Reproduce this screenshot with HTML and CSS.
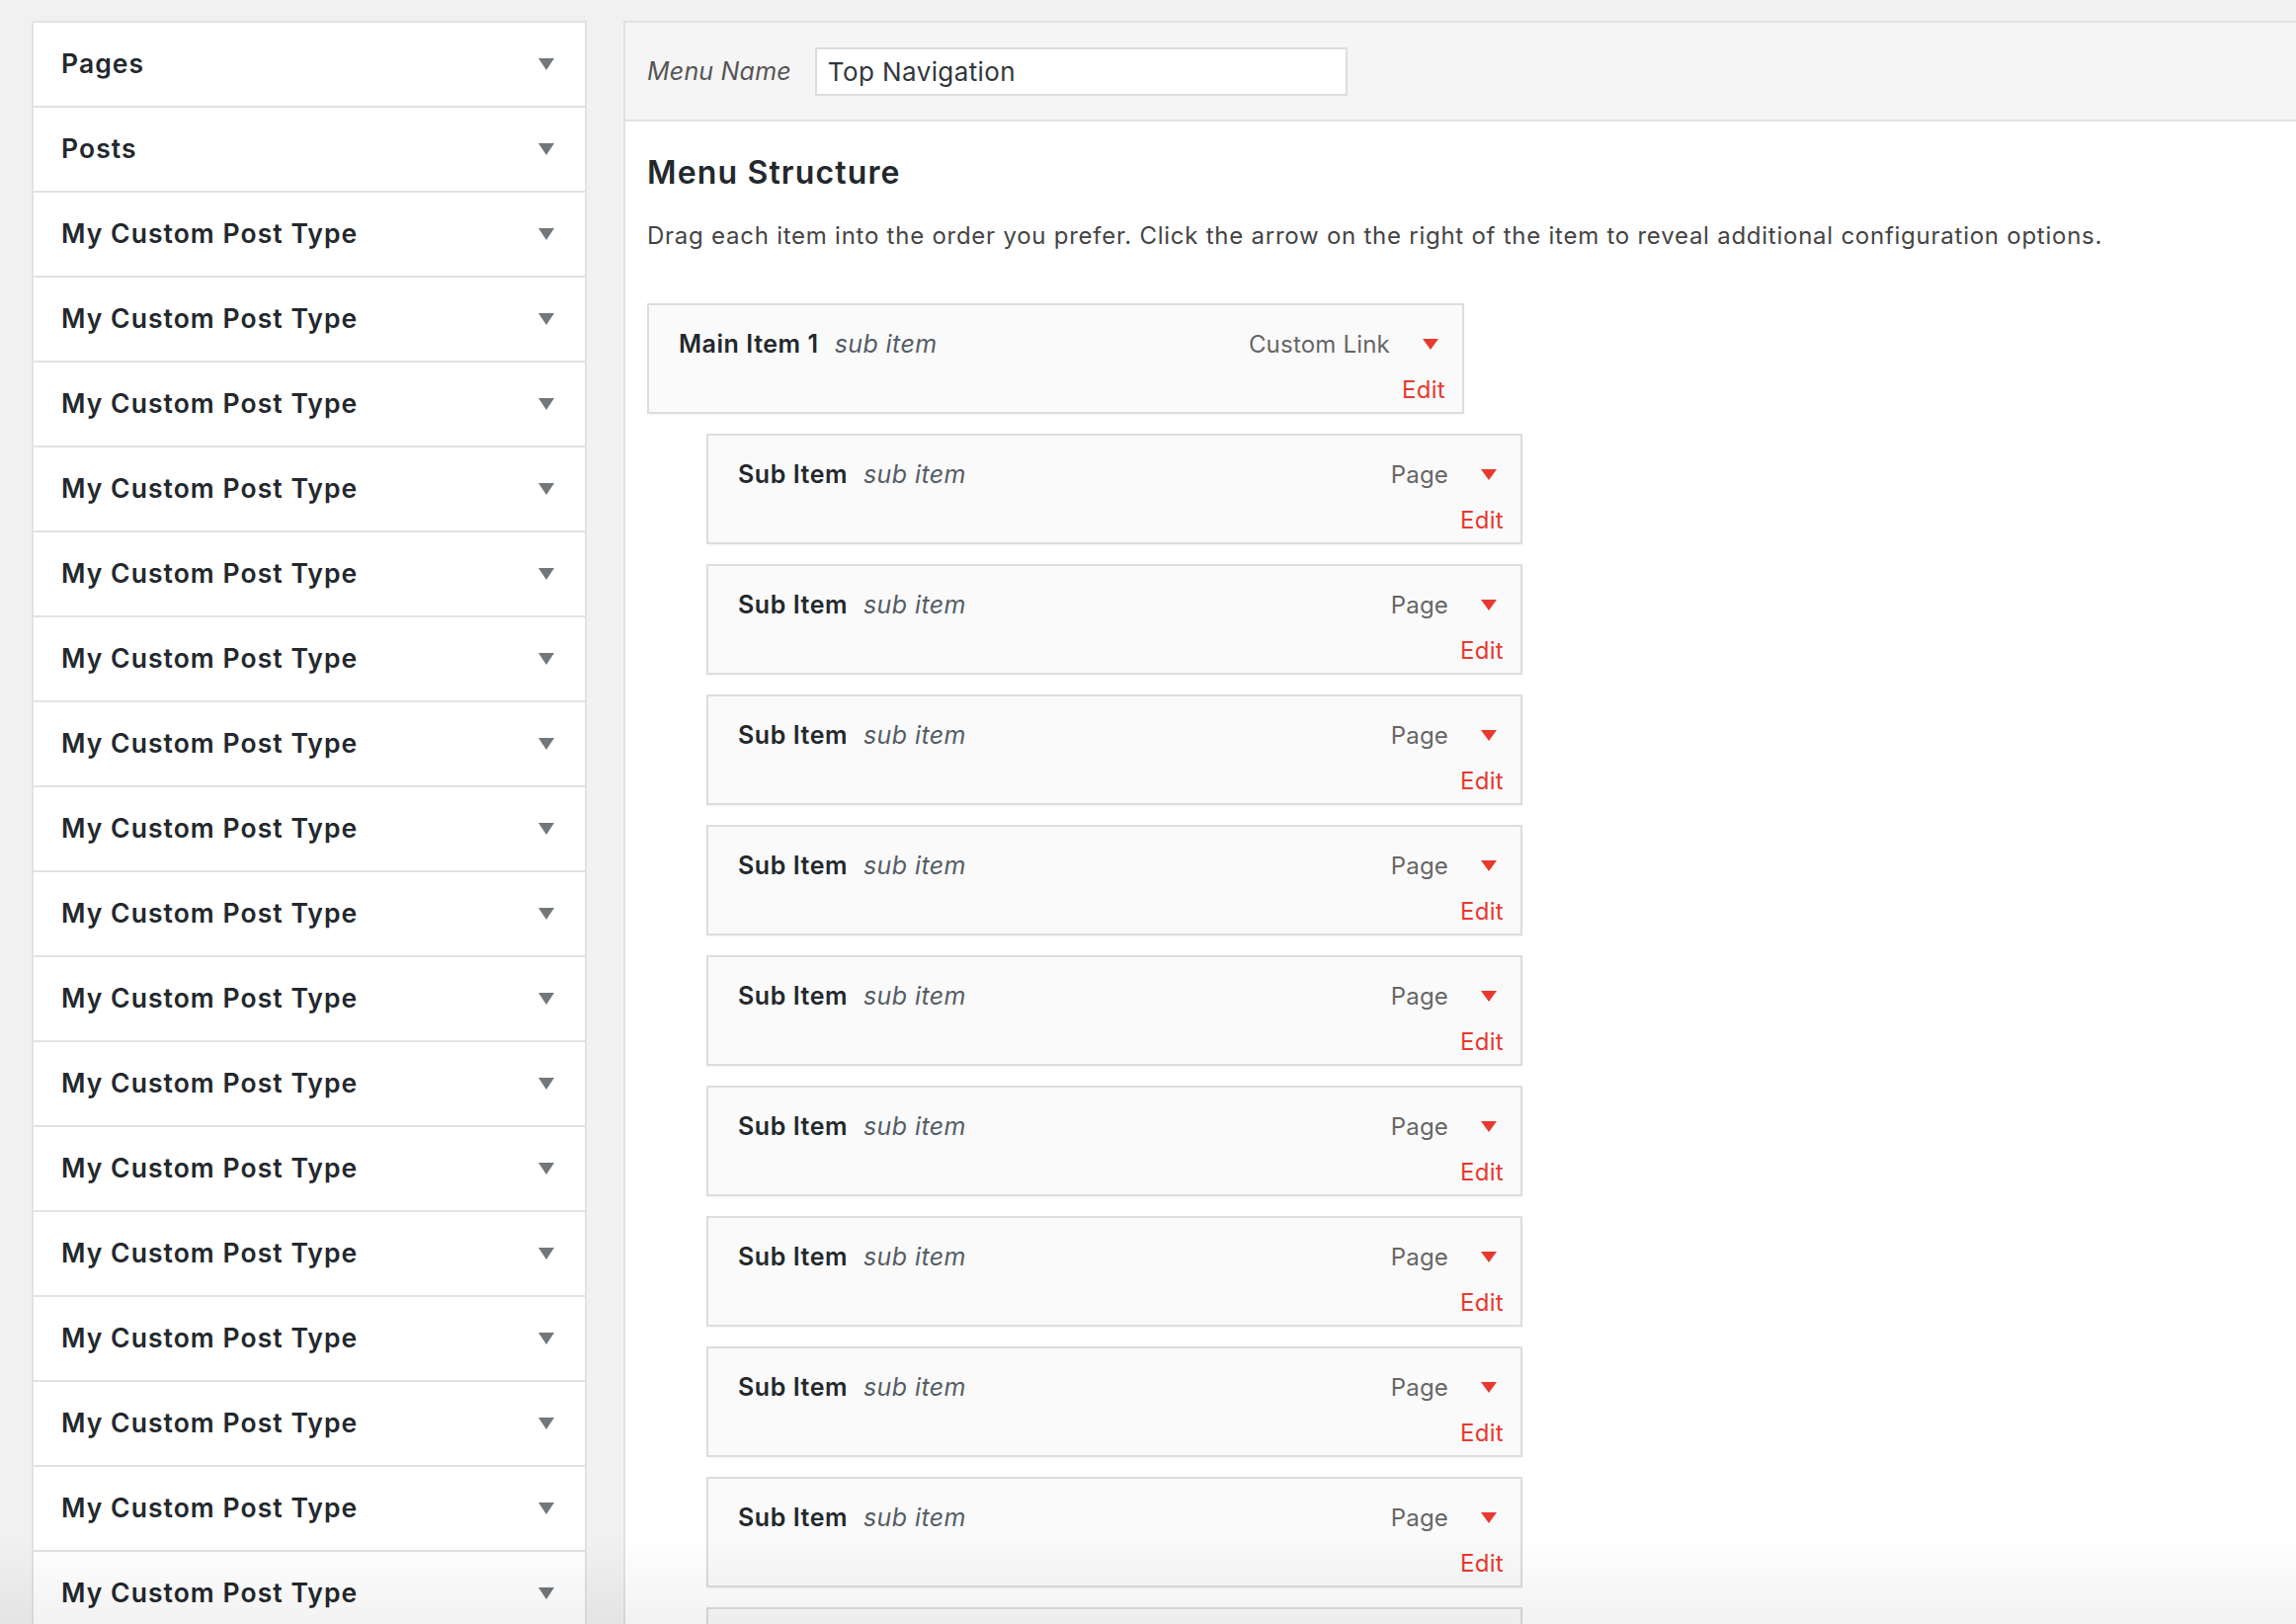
FILE: index.html
```html
<!DOCTYPE html>
<html lang="en">
<head>
<meta charset="utf-8">
<title>Menus</title>
<link rel="stylesheet" href="styles.css">
</head>
<body>
<div class="page">
  <aside class="side">
    <div class="acc"><span class="acc-title">Pages</span><span class="tri gray"></span></div>
    <div class="acc"><span class="acc-title">Posts</span><span class="tri gray"></span></div>
    <div class="acc"><span class="acc-title">My Custom Post Type</span><span class="tri gray"></span></div>
    <div class="acc"><span class="acc-title">My Custom Post Type</span><span class="tri gray"></span></div>
    <div class="acc"><span class="acc-title">My Custom Post Type</span><span class="tri gray"></span></div>
    <div class="acc"><span class="acc-title">My Custom Post Type</span><span class="tri gray"></span></div>
    <div class="acc"><span class="acc-title">My Custom Post Type</span><span class="tri gray"></span></div>
    <div class="acc"><span class="acc-title">My Custom Post Type</span><span class="tri gray"></span></div>
    <div class="acc"><span class="acc-title">My Custom Post Type</span><span class="tri gray"></span></div>
    <div class="acc"><span class="acc-title">My Custom Post Type</span><span class="tri gray"></span></div>
    <div class="acc"><span class="acc-title">My Custom Post Type</span><span class="tri gray"></span></div>
    <div class="acc"><span class="acc-title">My Custom Post Type</span><span class="tri gray"></span></div>
    <div class="acc"><span class="acc-title">My Custom Post Type</span><span class="tri gray"></span></div>
    <div class="acc"><span class="acc-title">My Custom Post Type</span><span class="tri gray"></span></div>
    <div class="acc"><span class="acc-title">My Custom Post Type</span><span class="tri gray"></span></div>
    <div class="acc"><span class="acc-title">My Custom Post Type</span><span class="tri gray"></span></div>
    <div class="acc"><span class="acc-title">My Custom Post Type</span><span class="tri gray"></span></div>
    <div class="acc"><span class="acc-title">My Custom Post Type</span><span class="tri gray"></span></div>
    <div class="acc"><span class="acc-title">My Custom Post Type</span><span class="tri gray"></span></div>
  </aside>

  <main class="panel">
    <header class="panel-head">
      <label class="name-label" for="menu-name">Menu Name</label>
      <input id="menu-name" class="name-input" type="text" value="Top Navigation">
    </header>
    <section class="panel-body">
      <h2 class="title">Menu Structure</h2>
      <p class="desc">Drag each item into the order you prefer. Click the arrow on the right of the item to reveal additional configuration options.</p>

      <ul class="menu">
        <li class="item">
          <div class="item-row">
            <span class="item-title">Main Item 1</span><span class="item-sub">sub item</span>
            <span class="item-type">Custom Link</span><span class="tri red"></span>
          </div>
          <div class="item-edit"><a href="#">Edit</a></div>
        </li>
        <li class="item child">
          <div class="item-row"><span class="item-title">Sub Item</span><span class="item-sub">sub item</span><span class="item-type">Page</span><span class="tri red"></span></div>
          <div class="item-edit"><a href="#">Edit</a></div>
        </li>
        <li class="item child">
          <div class="item-row"><span class="item-title">Sub Item</span><span class="item-sub">sub item</span><span class="item-type">Page</span><span class="tri red"></span></div>
          <div class="item-edit"><a href="#">Edit</a></div>
        </li>
        <li class="item child">
          <div class="item-row"><span class="item-title">Sub Item</span><span class="item-sub">sub item</span><span class="item-type">Page</span><span class="tri red"></span></div>
          <div class="item-edit"><a href="#">Edit</a></div>
        </li>
        <li class="item child">
          <div class="item-row"><span class="item-title">Sub Item</span><span class="item-sub">sub item</span><span class="item-type">Page</span><span class="tri red"></span></div>
          <div class="item-edit"><a href="#">Edit</a></div>
        </li>
        <li class="item child">
          <div class="item-row"><span class="item-title">Sub Item</span><span class="item-sub">sub item</span><span class="item-type">Page</span><span class="tri red"></span></div>
          <div class="item-edit"><a href="#">Edit</a></div>
        </li>
        <li class="item child">
          <div class="item-row"><span class="item-title">Sub Item</span><span class="item-sub">sub item</span><span class="item-type">Page</span><span class="tri red"></span></div>
          <div class="item-edit"><a href="#">Edit</a></div>
        </li>
        <li class="item child">
          <div class="item-row"><span class="item-title">Sub Item</span><span class="item-sub">sub item</span><span class="item-type">Page</span><span class="tri red"></span></div>
          <div class="item-edit"><a href="#">Edit</a></div>
        </li>
        <li class="item child">
          <div class="item-row"><span class="item-title">Sub Item</span><span class="item-sub">sub item</span><span class="item-type">Page</span><span class="tri red"></span></div>
          <div class="item-edit"><a href="#">Edit</a></div>
        </li>
        <li class="item child">
          <div class="item-row"><span class="item-title">Sub Item</span><span class="item-sub">sub item</span><span class="item-type">Page</span><span class="tri red"></span></div>
          <div class="item-edit"><a href="#">Edit</a></div>
        </li>
        <li class="item child">
          <div class="item-row"><span class="item-title">Sub Item</span><span class="item-sub">sub item</span><span class="item-type">Page</span><span class="tri red"></span></div>
          <div class="item-edit"><a href="#">Edit</a></div>
        </li>
      </ul>
    </section>
  </main>
</div>
<div class="fade"></div>
</body>
</html>
```

FILE: styles.css
```css
* { box-sizing: border-box; }

html, body {
  margin: 0;
  padding: 0;
  height: 100%;
  overflow: hidden;
}

body {
  background: #f1f1f1;
  font-family: Inter, "Noto Sans", "Liberation Sans", sans-serif;
  color: #23282d;
}

.page {
  display: flex;
  align-items: flex-start;
  padding: 21px 0 0 32px;
  gap: 37px;
  width: 2324px;
}

/* Left accordion */
.side {
  flex: 0 0 562px;
  background: #fff;
  border: 2px solid #e2e2e2;
  border-bottom: none;
}

.acc {
  height: 86px;
  display: flex;
  align-items: center;
  justify-content: space-between;
  padding: 0 31px 0 28px;
  border-bottom: 2px solid #e2e2e2;
}

.acc-title {
  font-size: 26.5px;
  font-weight: 600;
  color: #23282d;
  letter-spacing: 1.05px;
  margin-top: -2px;
}

.tri {
  display: inline-block;
  width: 0;
  height: 0;
  border-left: 8px solid transparent;
  border-right: 8px solid transparent;
  border-top: 12px solid #72777c;
}

.tri.red {
  border-top-color: #e8392f;
  border-top-width: 11px;
}

/* Right panel */
.panel {
  flex: 1 1 auto;
  background: #fff;
  border-left: 2px solid #e2e2e2;
  border-top: 2px solid #e2e2e2;
  min-height: 1700px;
}

.panel-head {
  height: 100px;
  background: #f5f5f5;
  border-bottom: 2px solid #e2e2e2;
  display: flex;
  align-items: center;
  padding-left: 22px;
}

.name-label {
  font-size: 25px;
  font-style: italic;
  color: #555;
  margin-right: 24px;
  letter-spacing: 0.2px;
}

.name-input {
  width: 539px;
  height: 49px;
  border: 2px solid #dddddd;
  background: #fff;
  font-family: inherit;
  font-size: 26px;
  color: #32373c;
  padding: 0 11px;
  outline: none;
  letter-spacing: 0.4px;
}

.panel-body {
  padding: 0 0 0 22px;
}

.title {
  margin: 0;
  padding-top: 30px;
  font-size: 32px;
  font-weight: 600;
  line-height: 44px;
  color: #23282d;
  letter-spacing: 1.15px;
}

.desc {
  margin: 24px 0 0 0;
  font-size: 24px;
  line-height: 36px;
  color: #444;
  letter-spacing: 0.75px;
}

.menu {
  list-style: none;
  margin: 50px 0 0 0;
  padding: 0;
  display: flex;
  flex-direction: column;
  gap: 20px;
}

.item {
  width: 827px;
  height: 112px;
  background: #fafafa;
  border: 2px solid #dddddd;
  box-shadow: 0 1px 2px rgba(0, 0, 0, 0.05);
  padding: 21px 17px 0 30px;
}

.item.child {
  margin-left: 60px;
  width: 826px;
}

.item-row {
  display: flex;
  align-items: center;
  height: 36px;
  padding-right: 7px;
}

.item-title {
  font-size: 25px;
  font-weight: 600;
  color: #23282d;
  letter-spacing: 0.55px;
}

.item-sub {
  font-size: 25px;
  font-style: italic;
  color: #555d66;
  margin-left: 16px;
  letter-spacing: 0.4px;
}

.item-type {
  margin-left: auto;
  font-size: 24px;
  color: #666;
  margin-right: 33px;
  letter-spacing: 0.2px;
}

.item-edit {
  margin-top: 11px;
  text-align: right;
  line-height: 36px;
}

.item-edit a {
  font-size: 24px;
  color: #e8392f;
  text-decoration: none;
  letter-spacing: 0.3px;
}

.fade {
  position: fixed;
  left: 0;
  right: 0;
  bottom: 0;
  height: 90px;
  pointer-events: none;
  background: linear-gradient(to bottom, rgba(0, 0, 0, 0), rgba(0, 0, 0, 0.05));
}
```
